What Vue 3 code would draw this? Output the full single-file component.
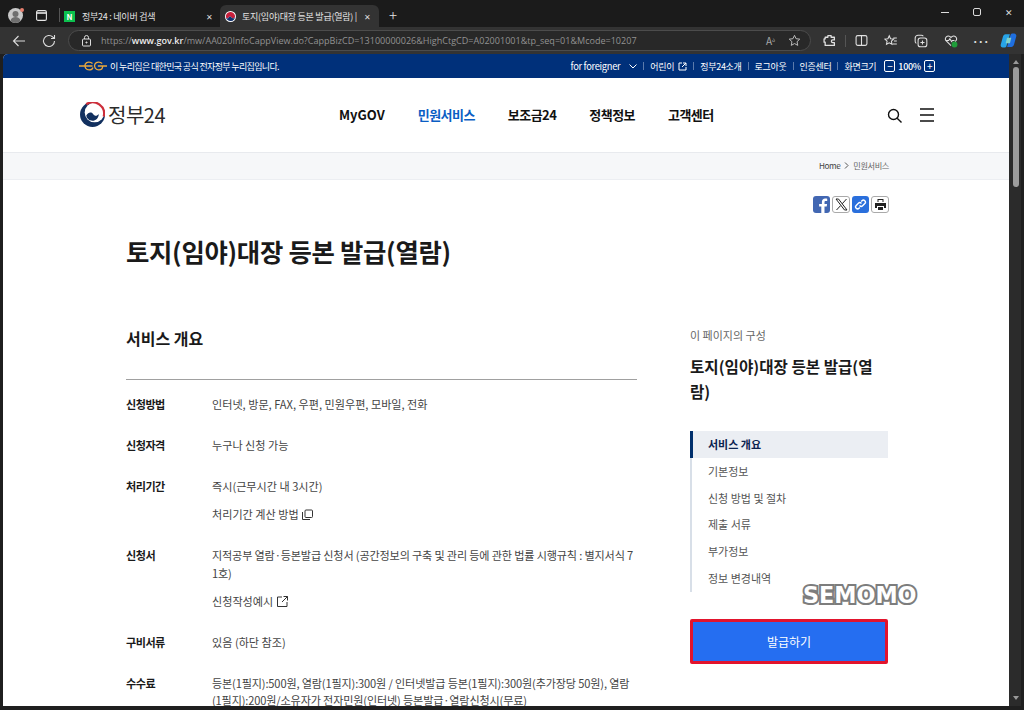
<script setup>
const topLinks = ['정부24소개', '로그아웃', '인증센터']
const mainMenu = [
  { name: 'MyGOV' },
  { name: '민원서비스', active: true },
  { name: '보조금24' },
  { name: '정책정보' },
  { name: '고객센터' }
]
const sideMenu = ['서비스 개요', '기본정보', '신청 방법 및 절차', '제출 서류', '부가정보', '정보 변경내역']
</script>

<template>
  <div class="window">
    <div class="tabbar">
      <div class="avatar">
        <svg width="15" height="15" viewBox="0 0 15 15">
          <circle cx="7.500" cy="7.500" r="7.500" fill="#c9c9c9" />
          <circle cx="7.500" cy="6" r="3" fill="#6f6f6f" />
          <path d="M2.500 13c.5-3 2.500-4 5-4s4.500 1 5 4a7.500 7.500 0 0 1-10 0z" fill="#6f6f6f" />
        </svg>
        <span class="avatar-dot"></span>
      </div>
      <svg class="tab-actions" width="11" height="11" viewBox="0 0 11 11" fill="none" stroke="#e6e6e6" stroke-width="1.100">
        <rect x=".6" y=".6" width="9.800" height="9.800" rx="1.500" />
        <path d="M.6 3h9.800" stroke-width="1.600" />
      </svg>
      <span class="tab-sep"></span>
      <div class="tab">
        <span class="naver">N</span>
        <span class="tab-title">정부24 : 네이버 검색</span>
        <span class="tab-close">✕</span>
      </div>
      <div class="tab tab-active">
        <svg class="tab-fav" width="11" height="11" viewBox="0 0 24 24">
          <circle cx="12" cy="12" r="12" fill="#fff" />
          <path d="M2 13a10 10 0 0 1 20-2c0 3-2 5-4.500 5-3 0-3.500-4-6.500-4-2 0-3 2-3.500 3.500C6 17 3 16 2 13z" fill="#c8203c" />
          <path d="M2 13c1 3 4 4 5.500 2.500.5-1.500 1.500-3.500 3.500-3.500 3 0 3.500 4 6.500 4 2.500 0 4.500-2 4.500-5a10 10 0 0 1-20 2z" fill="#12326e" />
        </svg>
        <span class="tab-title">토지(임야)대장 등본 발급(열람) |</span>
        <span class="tab-close">✕</span>
      </div>
      <span class="tab-new">+</span>
      <div class="win-btns">
        <span class="win-min"></span>
        <span class="win-max"></span>
        <span class="win-x">✕</span>
      </div>
    </div>

    <div class="toolbar">
      <svg width="14" height="14" viewBox="0 0 14 14" fill="none" stroke="#dcdcdc" stroke-width="1.100">
        <path d="M13 7H1.500M6.500 2 1.500 7l5 5" />
      </svg>
      <svg class="reload" width="14" height="14" viewBox="0 0 14 14" fill="none" stroke="#dcdcdc" stroke-width="1.100">
        <path d="M12.500 7a5.500 5.500 0 1 1-1.600-3.900L12.500 4.500M12.500 1v3.500H9" />
      </svg>
      <div class="address">
        <svg width="11" height="12" viewBox="0 0 11 12" fill="none" stroke="#dcdcdc" stroke-width="1">
          <rect x="1.500" y="4" width="8" height="7" rx="1" />
          <path d="M3.500 4V2.500a2 2 0 0 1 4 0V4" />
          <circle cx="5.500" cy="7.500" r=".6" fill="#dcdcdc" />
        </svg>
        <span class="url">https://<b>www.gov.kr</b>/mw/AA020InfoCappView.do?CappBizCD=13100000026&amp;HighCtgCD=A02001001&amp;tp_seq=01&amp;Mcode=10207</span>
        <span class="read">A<small>ა</small></span>
        <svg width="13" height="13" viewBox="0 0 24 24" fill="none" stroke="#bdbdbd" stroke-width="1.800">
          <path d="m12 2.500 2.900 6.200 6.800.8-5 4.700 1.300 6.800-6-3.400-6 3.400 1.300-6.800-5-4.700 6.800-.8z" />
        </svg>
      </div>
      <div class="tools">
        <svg width="13" height="13" viewBox="0 0 24 24" fill="none" stroke="#e0e0e0" stroke-width="2.400">
          <path d="M9 3h6v3h6v5h-3a2.500 2.500 0 0 0 0 5h3v5H4v-6H2V9h2V6h5z" stroke-linejoin="round" />
        </svg>
        <span class="tool-sep"></span>
        <svg width="13" height="13" viewBox="0 0 24 24" fill="none" stroke="#e0e0e0" stroke-width="2">
          <rect x="2" y="3" width="20" height="18" rx="3" />
          <path d="M12 3v18" />
        </svg>
        <svg width="14" height="14" viewBox="0 0 24 24" fill="none" stroke="#e0e0e0" stroke-width="1.800">
          <path d="m9 3 2.300 5 5.200.7-3.800 3.500 1 5.300L9 15l-4.700 2.500 1-5.300L1.500 8.700 6.700 8zM16 7h6M17 12h5M15 17h7" />
        </svg>
        <svg width="14" height="14" viewBox="0 0 24 24" fill="none" stroke="#e0e0e0" stroke-width="1.800">
          <rect x="7" y="7" width="15" height="15" rx="4" />
          <path d="M14.500 11v7M11 14.500h7M4 16a4 4 0 0 1-2-3.500V7a5 5 0 0 1 5-5h5.500A4 4 0 0 1 16 4" />
        </svg>
        <svg width="14" height="14" viewBox="0 0 24 24" fill="none" stroke="#e0e0e0" stroke-width="1.800">
          <path d="M12 20 3.500 11.500a5 5 0 0 1 7-7L12 6l1.500-1.500a5 5 0 0 1 7 7L19 13" />
          <path d="M3 11h5l2-3 3 5 1.500-2H18" />
          <circle cx="18" cy="18" r="5" fill="#1f9d3a" stroke="none" />
        </svg>
        <span class="dots">···</span>
        <svg class="copilot" width="17" height="17" viewBox="0 0 24 24">
          <path d="M8 3h6l-5 17c-.5 1.500-1.500 2-3 2H4c-2 0-3.500-2-3-4l3-11c.5-2.500 2-4 4-4z" fill="#27a4e8" />
          <path d="M16 21h-6l5-17c.5-1.500 1.500-2 3-2h2c2 0 3.500 2 3 4l-3 11c-.5 2.500-2 4-4 4z" fill="#1f6fe0" />
          <path d="M10 8h6l-2 8H8z" fill="#7fd0c8" />
        </svg>
      </div>
    </div>

    <div class="viewport">
      <div class="page">
        <div class="gov-bar">
          <div class="gov-notice">
            <svg width="28" height="10" viewBox="0 0 29 10" fill="none" stroke="#eaa83c" stroke-width="1.400">
              <path d="M0 5h9M14 2.500C12 .5 8 .5 6.500 3c-1.500 3 1 6 4 6 2 0 3.500-1 4-2.500M7 5h7M24 2.500C22 .5 18 .5 16.500 3c-1.500 3 1 6 4 6 2.500 0 4-1.500 4-4h-5M24 5h5" />
            </svg>
            <span>이 누리집은 대한민국 공식 전자정부 누리집입니다.</span>
          </div>
          <div class="gov-links">
            <span class="foreigner">for foreigner
              <svg width="8" height="5" viewBox="0 0 8 5" fill="none" stroke="#fff"><path d="m.5.500 3.500 3.500L7.500.500" /></svg>
            </span>
            <span class="bar-sep"></span>
            <span class="kids">어린이
              <svg width="9" height="9" viewBox="0 0 9 9" fill="none" stroke="#fff"><path d="M4 1H1v7h7V5M5 1h3v3M8 1 4 5" /></svg>
            </span>
            <template v-for="link in topLinks" :key="link">
              <span class="bar-sep"></span>
              <span>{{ link }}</span>
            </template>
            <span class="bar-sep"></span>
            <span>화면크기</span>
            <span class="zoom-btn">−</span>
            <span class="zoom-val">100%</span>
            <span class="zoom-btn">+</span>
          </div>
        </div>

        <header class="site-head">
          <div class="logo">
            <svg width="25" height="25" viewBox="0 0 24 24">
              <circle cx="12" cy="12" r="12" fill="#12305f" />
              <circle cx="14" cy="10" r="9.500" fill="#fff" />
              <path d="M6 2.200A11 11 0 0 1 22.800 14" fill="none" stroke="#cd2e3a" stroke-width="2.200" />
              <path d="M6 13c2-3.500 5-3.500 6.500-1.500 1.500 2 3.500 2.500 5.500 0 0 4-3 6.500-6 6.500-3 0-5.500-2-6-5z" fill="#12305f" />
            </svg>
            <span>정부24</span>
          </div>
          <nav class="main-nav">
            <a v-for="item in mainMenu" :key="item.name" :class="{ on: item.active }">{{ item.name }}</a>
          </nav>
          <div class="head-icons">
            <svg width="15" height="15" viewBox="0 0 15 15" fill="none" stroke="#111" stroke-width="1.400">
              <circle cx="6.500" cy="6.500" r="5" />
              <path d="m10.200 10.200 4.300 4.300" />
            </svg>
            <svg width="14" height="14" viewBox="0 0 14 14" fill="none" stroke="#111" stroke-width="1.300">
              <path d="M0 1h14M0 7h14M0 13h14" />
            </svg>
          </div>
        </header>

        <div class="crumbs">
          <div class="crumbs-in">
            <span>Home</span>
            <svg width="5" height="7" viewBox="0 0 5 7" fill="none" stroke="#555"><path d="m1 .5 3 3-3 3" /></svg>
            <span class="crumb-now">민원서비스</span>
          </div>
        </div>

        <div class="share">
          <span class="share-btn fb">
            <svg width="17" height="17" viewBox="0 0 17 17"><path d="M11.500 17v-6.500h2.200l.4-2.600h-2.600V6.300c0-.8.300-1.300 1.400-1.300h1.300V2.700c-.3 0-1.100-.1-2-.1-2 0-3.300 1.200-3.300 3.400v1.900H6.100v2.600h2.200V17z" fill="#fff" /></svg>
          </span>
          <span class="share-btn line">
            <svg width="13" height="13" viewBox="0 0 13 13" fill="none" stroke="#222"><path d="M1 1h2.500l8.500 11H9.500zM11.500 1 7.200 5.800M5.600 7.600 1.500 12" /></svg>
          </span>
          <span class="share-btn link">
            <svg width="13" height="13" viewBox="0 0 13 13" fill="none" stroke="#fff" stroke-width="1.400">
              <path d="m5.500 7.500.3.300c.8.800 2 .8 2.800 0l2.200-2.200c.8-.8.800-2 0-2.800s-2-.8-2.800 0l-.8.800M7.500 5.500l-.3-.3c-.8-.8-2-.8-2.800 0L2.200 7.400c-.8.800-.8 2 0 2.800s2 .8 2.800 0l.8-.8" />
            </svg>
          </span>
          <span class="share-btn line">
            <svg width="13" height="13" viewBox="0 0 13 13" fill="#222">
              <path d="M3.500 1h6v3h-1V2h-4v2h-1z" />
              <path d="M1 5h11v5h-2V8H3v2H1z" />
              <path d="M4 9h5v3H4z" />
            </svg>
          </span>
        </div>

        <h1 class="title">토지(임야)대장 등본 발급(열람)</h1>

        <div class="columns">
          <main class="content">
            <h2 class="sec-title">서비스 개요</h2>
            <dl class="info">
              <div class="row">
                <dt>신청방법</dt>
                <dd><p>인터넷, 방문, FAX, 우편, 민원우편, 모바일, 전화</p></dd>
              </div>
              <div class="row">
                <dt>신청자격</dt>
                <dd><p>누구나 신청 가능</p></dd>
              </div>
              <div class="row">
                <dt>처리기간</dt>
                <dd>
                  <p>즉시(근무시간 내 3시간)</p>
                  <p class="with-icon">처리기간 계산 방법
                    <svg width="11" height="11" viewBox="0 0 11 11" fill="none" stroke="#333"><rect x="3" y="1" width="7.500" height="7.500" rx="1" /><path d="M.5 3v7.500H8" /></svg>
                  </p>
                </dd>
              </div>
              <div class="row">
                <dt>신청서</dt>
                <dd>
                  <p class="long">지적공부 열람·등본발급 신청서 (공간정보의 구축 및 관리 등에 관한 법률 시행규칙 : 별지서식 71호)</p>
                  <p class="with-icon">신청작성예시
                    <svg width="11" height="11" viewBox="0 0 11 11" fill="none" stroke="#333"><path d="M5 1H.5v9.500H10V6M6.500.5h4v4M10.500.5 5 6" /></svg>
                  </p>
                </dd>
              </div>
              <div class="row">
                <dt>구비서류</dt>
                <dd><p>있음 (하단 참조)</p></dd>
              </div>
              <div class="row">
                <dt>수수료</dt>
                <dd><p class="long">등본(1필지):500원, 열람(1필지):300원 / 인터넷발급 등본(1필지):300원(추가장당 50원), 열람(1필지):200원/소유자가 전자민원(인터넷) 등본발급·열람신청시(무료)</p></dd>
              </div>
            </dl>
          </main>

          <aside class="side">
            <div class="side-label">이 페이지의 구성</div>
            <div class="side-title">토지(임야)대장 등본 발급(열람)</div>
            <ul class="side-nav">
              <li v-for="(item, i) in sideMenu" :key="item" :class="{ on: i === 0 }">{{ item }}</li>
            </ul>
            <button class="apply">발급하기</button>
            <span class="mark">SEMOMO</span>
          </aside>
        </div>
      </div>

      <div class="scrollbar">
        <span class="arrow-up"></span>
        <span class="thumb"></span>
        <span class="arrow-down"></span>
      </div>
    </div>
  </div>
</template>

<style>
html, body { margin: 0; background: #1e1e1e; }
</style>

<style scoped>
.window {
  width: 1024px;
  height: 710px;
  overflow: hidden;
  display: flex;
  flex-direction: column;
  background: #1f1f1f;
  font-family: "Noto Sans CJK KR", "Noto Sans", sans-serif;
}

/* tab strip */
.tabbar {
  height: 27px;
  flex: none;
  display: flex;
  align-items: center;
  padding: 3px 0 0 8px;
  box-sizing: border-box;
  background: #1b1b1b;
  color: #e4e4e4;
  font-size: 9px;
}
.avatar {
  position: relative;
  width: 15px;
  height: 15px;
  display: flex;
}
.avatar-dot {
  position: absolute;
  right: -1px;
  top: 0;
  width: 4px;
  height: 4px;
  border-radius: 50%;
  background: #e8806f;
}
.tab-actions { margin-left: 13px; }
.tab-sep {
  width: 1px;
  height: 14px;
  margin: 0 4px 0 12px;
  background: #555;
}
.tab {
  width: 155px;
  height: 22px;
  margin-top: 2px;
  display: flex;
  align-items: center;
  padding: 0 6px 0 0;
  box-sizing: border-box;
}
.tab-active {
  width: 159px;
  height: 22px;
  padding: 0 8px 0 5px;
  margin-left: 1px;
  border-radius: 6px 6px 0 0;
  background: #333;
}
.naver {
  width: 11px;
  height: 11px;
  margin-right: 7px;
  background: #0cc14e;
  color: #fff;
  font-size: 8px;
  font-weight: 700;
  line-height: 11px;
  text-align: center;
}
.tab-fav { flex: none; margin-right: 6px; }
.tab-title {
  flex: 1;
  overflow: hidden;
  white-space: nowrap;
  letter-spacing: -.25px;
}
.tab-close { font-size: 8px; margin-left: 4px; color: #ddd; }
.tab-new { margin-left: 10px; font-size: 15px; font-weight: 300; margin-top: -1px; }
.win-btns {
  margin-left: auto;
  display: flex;
  align-items: center;
  gap: 24px;
  padding-right: 11px;
  padding-bottom: 6px;
}
.win-min { width: 8px; height: 1px; background: #ddd; }
.win-max { width: 6px; height: 6px; border: 1px solid #ddd; border-radius: 2px; }
.win-x { font-size: 9px; color: #ddd; }

/* address row */
.toolbar {
  height: 27px;
  flex: none;
  display: flex;
  align-items: center;
  padding-left: 12px;
  box-sizing: border-box;
  background: #333;
}
.reload { margin-left: 16px; }
.address {
  width: 743px;
  height: 21px;
  margin-left: 12px;
  padding: 0 9px 0 12px;
  box-sizing: border-box;
  display: flex;
  align-items: center;
  border: 1px solid #4c4c4c;
  border-radius: 11px;
  background: #282828;
}
.url {
  flex: 1;
  margin-left: 9px;
  overflow: hidden;
  white-space: nowrap;
  font-family: "Open Sans", sans-serif;
  font-size: 9.050px;
  color: #929292;
}
.url b { color: #efefef; font-weight: 600; }
.read { margin-right: 13px; color: #a8a8a8; font-size: 10px; }
.read small { font-size: 6px; vertical-align: 3px; }
.tools {
  margin-left: 12px;
  display: flex;
  align-items: center;
  gap: 16px;
}
.tool-sep { width: 1px; height: 12px; margin: 0 -7px; background: #555; }
.dots { margin-left: -2px; color: #e0e0e0; font-size: 11px; font-weight: 700; letter-spacing: -1px; }
.copilot { margin-left: -5px; }

.viewport {
  flex: 1;
  min-height: 0;
  display: flex;
  margin: 0 3px 4px;
}
.page {
  flex: 1;
  min-width: 0;
  overflow: hidden;
  background: #fff;
  border-radius: 5px 0 0 0;
  color: #1a1a1a;
}
.scrollbar {
  width: 11px;
  padding-left: 1px;
  display: flex;
  flex-direction: column;
  align-items: center;
  background: #2b2b2b;
}
.arrow-up, .arrow-down {
  width: 0;
  height: 0;
  border-left: 3px solid transparent;
  border-right: 3px solid transparent;
}
.arrow-up { margin-top: 6px; border-bottom: 4px solid #999; }
.arrow-down { margin-bottom: 6px; border-top: 4px solid #999; }
.thumb {
  width: 6px;
  height: 120px;
  margin-top: 3px;
  margin-bottom: auto;
  border-radius: 3px;
  background: #9c9c9c;
}

/* blue notice bar */
.gov-bar {
  height: 24px;
  display: flex;
  align-items: center;
  justify-content: space-between;
  padding: 0 74px 0 76px;
  background: #00307a;
  color: #fff;
  font-size: 9px;
  letter-spacing: -.3px;
}
.gov-notice, .gov-links, .foreigner, .kids {
  display: flex;
  align-items: center;
}
.gov-notice { gap: 3px; letter-spacing: -.65px; }
.foreigner { gap: 9px; font-size: 9.300px; }
.kids { gap: 4px; }
.bar-sep {
  width: 1px;
  height: 8px;
  margin: 0 6px;
  background: #5c7bab;
}
.zoom-btn {
  width: 9px;
  height: 10px;
  margin-left: 8px;
  border: 1px solid #fff;
  border-radius: 2px;
  font-size: 10px;
  line-height: 10px;
  text-align: center;
}
.zoom-val { margin-left: 3px; margin-right: -5px; font-weight: 500; }

/* site header */
.site-head {
  height: 74px;
  display: flex;
  align-items: center;
  padding: 0 75px 2px 77px;
  box-sizing: border-box;
}
.logo {
  width: 259px;
  display: flex;
  align-items: center;
  gap: 3px;
  font-size: 20px;
  color: #2b2b2b;
  letter-spacing: -.5px;
}
.main-nav {
  display: flex;
  gap: 33px;
  font-size: 13px;
  font-weight: 700;
  letter-spacing: -.55px;
  color: #111;
}
.main-nav a:first-child { letter-spacing: 0; }
.main-nav a.on { color: #0b5ec4; }
.head-icons {
  margin-left: auto;
  padding-top: 2px;
  display: flex;
  align-items: center;
  gap: 18px;
}

/* breadcrumb */
.crumbs {
  height: 26px;
  background: #f6f7f9;
  border-top: 1px solid #e8eaee;
  border-bottom: 1px solid #eceef2;
  box-sizing: content-box;
}
.crumbs-in {
  display: flex;
  justify-content: flex-end;
  align-items: center;
  gap: 4px;
  height: 24px;
  padding-right: 120px;
  font-size: 8.200px;
  letter-spacing: -.4px;
  color: #444;
}
.crumb-now { color: #666; }

.share {
  display: flex;
  justify-content: flex-end;
  gap: 2px;
  margin: 16px 120px 0 0;
}
.share-btn {
  width: 17px;
  height: 17px;
  display: flex;
  align-items: center;
  justify-content: center;
  border-radius: 3px;
  overflow: hidden;
}
.share-btn.fb { background: #4267b2; }
.share-btn.line { width: 16px; height: 15px; border: 1px solid #aaa; background: #fff; }
.share-btn.link { background: #2a6fdc; }

.title {
  margin: 20px 0 0 123px;
  font-size: 25.400px;
  line-height: 36px;
  font-weight: 700;
  color: #1a1a1a;
  letter-spacing: -.3px;
}

.columns {
  display: flex;
  padding-left: 123px;
  margin-top: 46px;
}
.content { width: 511px; }
.sec-title {
  margin: 0;
  height: 65px;
  padding-top: 11px;
  box-sizing: border-box;
  border-bottom: 1px solid #a0a0a0;
  font-size: 16px;
  line-height: 24px;
  font-weight: 700;
  color: #1a1a1a;
}
.info { margin: 16px 0 0; }
.row {
  display: flex;
  margin-bottom: 23.500px;
  font-size: 11.100px;
  line-height: 17.500px;
}
dt {
  width: 86px;
  flex: none;
  font-weight: 700;
  letter-spacing: -.5px;
  color: #1a1a1a;
}
dd {
  flex: 1;
  margin: 0;
  color: #444;
  word-break: break-all;
}
dd p { margin: 0 0 10.500px; }
dd p:last-child { margin-bottom: 0; }
dd p.long { letter-spacing: -.15px; }
.with-icon svg { vertical-align: -1px; margin-left: 1px; }

/* right column */
.side {
  position: relative;
  width: 198px;
  margin-left: 53px;
  padding-top: 12px;
}
.side-label { font-size: 11px; line-height: 16px; color: #666; }
.side-title {
  margin-top: 11px;
  width: 190px;
  font-size: 15.600px;
  line-height: 25px;
  font-weight: 700;
  color: #1a1a1a;
  word-break: break-all;
}
.side-nav {
  list-style: none;
  margin: 27px 0 0;
  padding: 0;
  border-left: 2px solid #d8dfe8;
}
.side-nav li {
  height: 26.800px;
  margin-left: -2px;
  padding-left: 18px;
  box-sizing: border-box;
  font-size: 11px;
  line-height: 26px;
  color: #555;
}
.side-nav li.on {
  border-left: 3px solid #002f6c;
  padding-left: 15px;
  background: #ebeef3;
  color: #0b2350;
  font-weight: 700;
}
.apply {
  display: block;
  width: 100%;
  height: 45px;
  margin-top: 27px;
  border: 3px solid #e2142d;
  border-radius: 2px;
  background: #256ef1;
  color: #fff;
  font-family: inherit;
  font-size: 12px;
}
.mark {
  position: absolute;
  left: 113px;
  top: 267px;
  font-family: "DejaVu Sans", sans-serif;
  font-size: 22.300px;
  font-weight: 700;
  color: #fff;
  -webkit-text-stroke: 4px #7d7d7d;
  paint-order: stroke fill;
}
</style>
